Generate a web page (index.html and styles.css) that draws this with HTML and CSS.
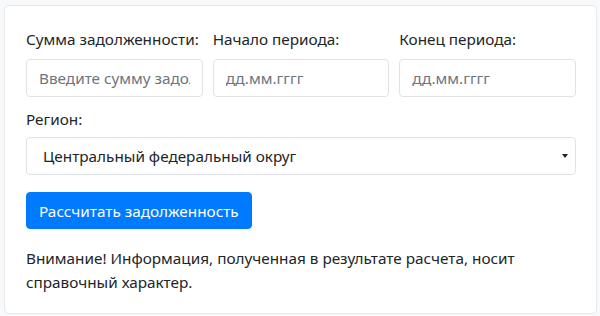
FILE: index.html
```html
<!DOCTYPE html>
<html lang="ru">
<head>
<meta charset="utf-8">
<title>Расчет задолженности</title>
<link rel="stylesheet" href="styles.css">
</head>
<body>
<div class="card">
  <form class="calc-form">
    <div class="form-row">
      <div class="col">
        <label class="field-label" for="sum">Сумма задолженности:</label>
        <input class="form-control" id="sum" type="text" placeholder="Введите сумму задолженности">
      </div>
      <div class="col">
        <label class="field-label" for="start">Начало периода:</label>
        <input class="form-control" id="start" type="text" placeholder="дд.мм.гггг">
      </div>
      <div class="col">
        <label class="field-label" for="end">Конец периода:</label>
        <input class="form-control" id="end" type="text" placeholder="дд.мм.гггг">
      </div>
    </div>
    <div class="region-group">
      <label class="field-label region-label" for="region">Регион:</label>
      <div class="select-wrap">
        <select class="form-select" id="region">
          <option>Центральный федеральный округ</option>
        </select>
      </div>
    </div>
    <button type="button" class="btn-primary">Рассчитать задолженность</button>
    <p class="note">Внимание! Информация, полученная в результате расчета, носит справочный характер.</p>
  </form>
</div>
</body>
</html>
```

FILE: styles.css
```css
* { box-sizing: border-box; }
html, body { margin: 0; padding: 0; }
body {
  background: #f8f9fa;
  font-family: "Noto Sans", "Open Sans", sans-serif;
  font-size: 15.3px;
  line-height: 24px;
  color: #212529;
}
.card {
  margin: 5px 3px 0 4px;
  background: #fff;
  border: 1px solid #e6e8eb;
  border-radius: 5px;
  padding: 21px 20px 19px 21px;
}
.calc-form { display: flex; flex-direction: column; }
.form-row {
  display: grid;
  grid-template-columns: 1fr 1fr 1fr;
  column-gap: 10px;
}
.col { display: flex; flex-direction: column; min-width: 0; }
.field-label {
  display: block;
  margin-bottom: 8px;
  white-space: nowrap;
}
.form-control, .form-select {
  display: block;
  width: 100%;
  height: 38px;
  padding: 6px 12px;
  font: inherit;
  color: #495057;
  background: #fff;
  border: 1px solid #dfe3e7;
  border-radius: 4px;
  outline: none;
}
.form-control::placeholder { color: #6c757d; opacity: 1; }
.region-group { margin-top: 10px; }
.region-label { margin-bottom: 6px; }
.select-wrap { position: relative; }
.form-select {
  appearance: none;
  -webkit-appearance: none;
  padding-left: 16px;
  color: #212529;
}
.select-wrap::after {
  content: "";
  position: absolute;
  right: 8px;
  top: 17px;
  border-left: 3px solid transparent;
  border-right: 3px solid transparent;
  border-top: 4px solid #222;
}
.btn-primary {
  align-self: flex-start;
  margin-top: 17px;
  height: 37px;
  padding: 0 12px;
  font: inherit;
  color: #fff;
  background: #007bff;
  border: 1px solid #007bff;
  border-radius: 4px;
}
.note { margin: 17px 0 0; }
```
